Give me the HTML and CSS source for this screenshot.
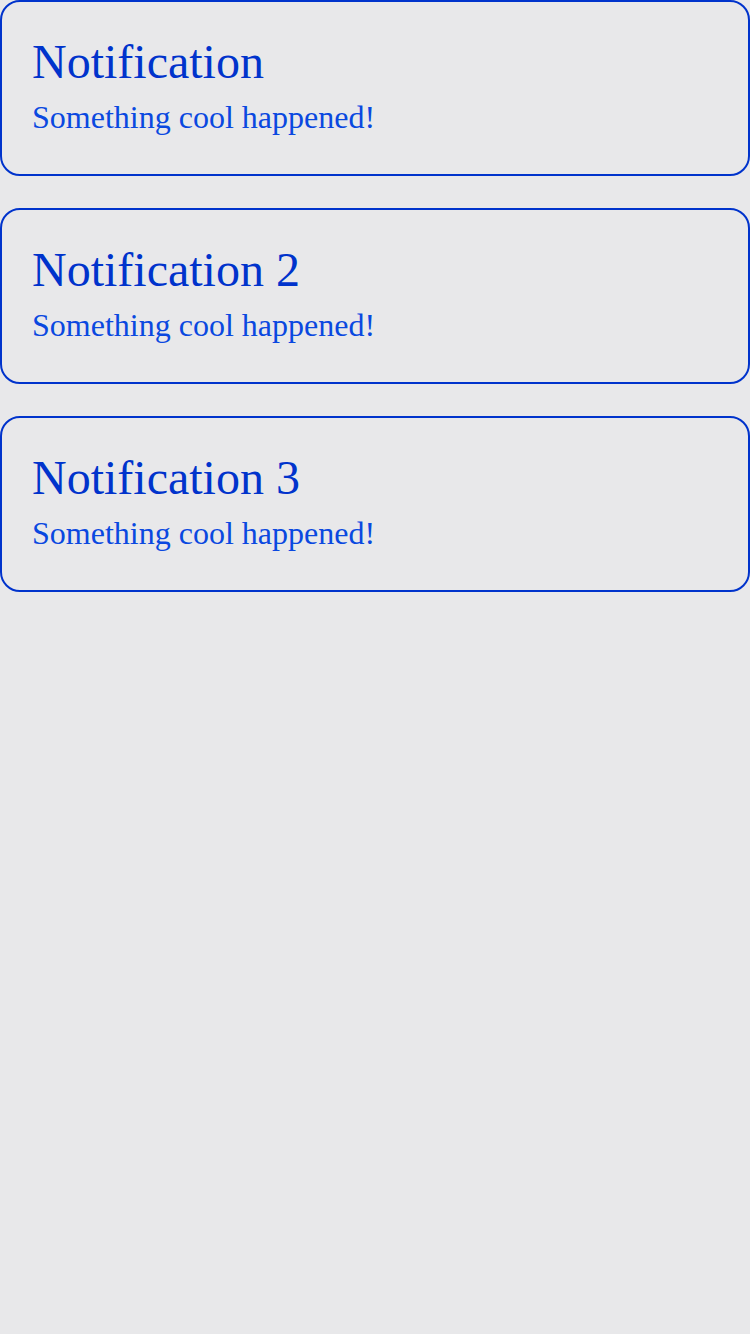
FILE: index.html
```html
<!DOCTYPE html>
<html>
<head>
<meta charset="utf-8">
<link rel="stylesheet" href="styles.css">
</head>
<body>
<div class="list">
  <div class="card">
    <div class="title">Notification</div>
    <div class="body">Something cool happened!</div>
  </div>
  <div class="card">
    <div class="title">Notification 2</div>
    <div class="body">Something cool happened!</div>
  </div>
  <div class="card">
    <div class="title">Notification 3</div>
    <div class="body">Something cool happened!</div>
  </div>
</div>
</body>
</html>
```
FILE: styles.css
```css
html, body {
  margin: 0;
  padding: 0;
  background: #e8e8ea;
  font-family: "Liberation Serif", serif;
}
.list {
  display: flex;
  flex-direction: column;
  gap: 32px;
}
.card {
  border: 2px solid #0033cc;
  border-radius: 20px;
  padding: 32px 30px 0 30px;
  box-sizing: border-box;
  height: 176px;
}
.title {
  font-size: 48px;
  line-height: 55px;
  color: #0033cc;
  margin-bottom: 10px;
}
.body {
  font-size: 32px;
  line-height: 37px;
  color: #0a48e0;
}
```
